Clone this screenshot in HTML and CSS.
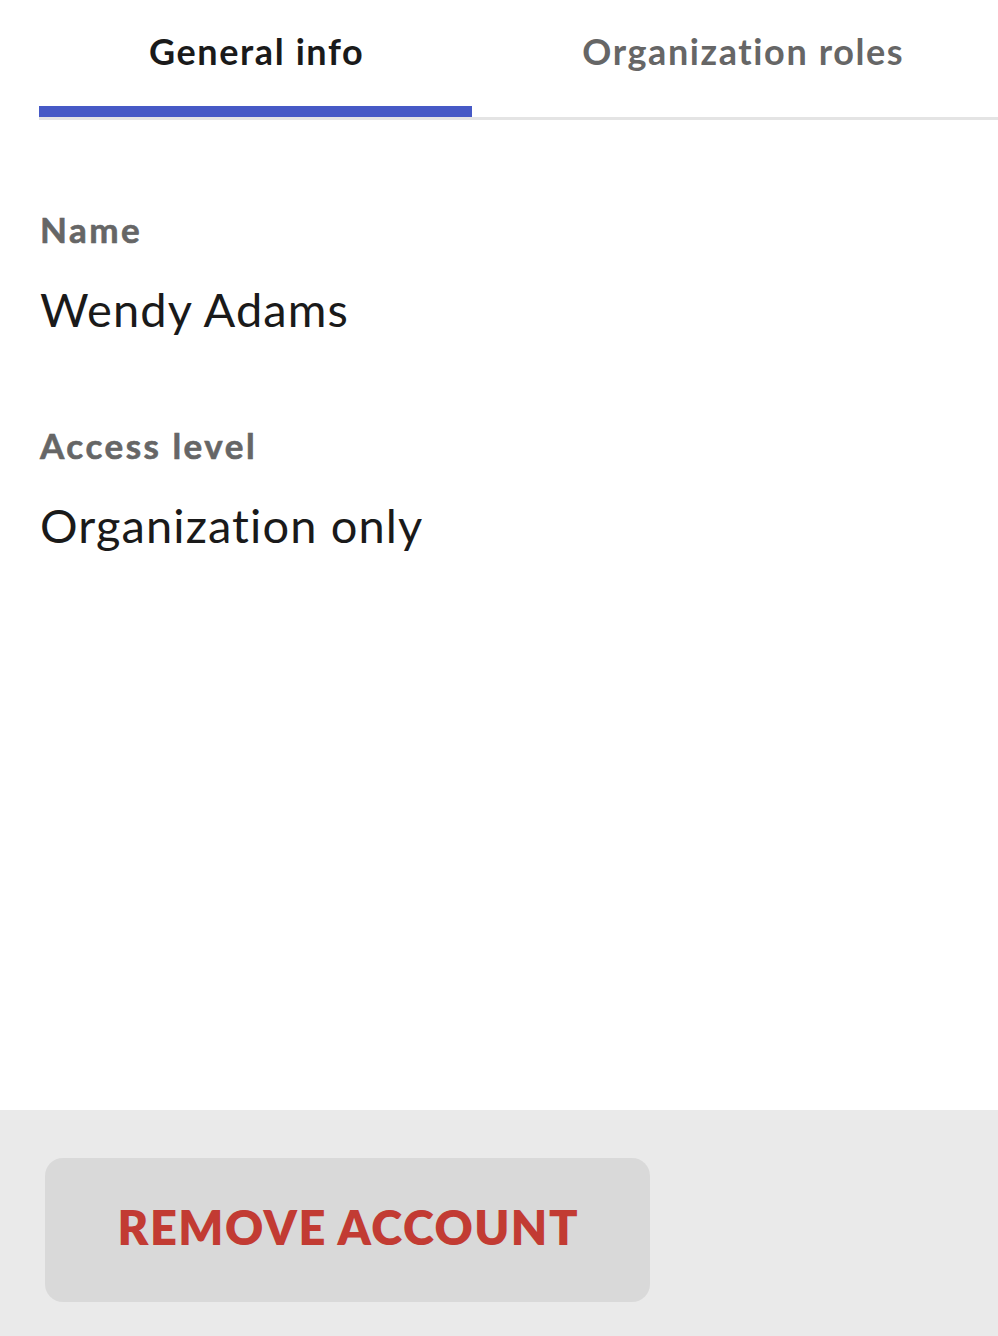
FILE: index.html
```html
<!DOCTYPE html>
<html lang="en">
<head>
<meta charset="utf-8">
<title>Account</title>
<link rel="stylesheet" href="styles.css">
</head>
<body>
<div class="page">
  <main class="main">
    <nav class="tabs">
      <div class="tab tab-active">General info</div>
      <div class="tab">Organization roles</div>
    </nav>
    <section class="details">
      <div class="field">
        <div class="label">Name</div>
        <div class="value">Wendy Adams</div>
      </div>
      <div class="field">
        <div class="label">Access level</div>
        <div class="value">Organization only</div>
      </div>
    </section>
  </main>
  <footer class="footer">
    <button class="remove-btn" type="button">REMOVE ACCOUNT</button>
  </footer>
</div>
</body>
</html>
```

FILE: styles.css
```css
html, body {
  margin: 0;
  padding: 0;
  background: #ffffff;
}

body {
  font-family: Lato, "Open Sans", "Liberation Sans", sans-serif;
  font-variant-ligatures: none;
  color: #1a1a1a;
  overflow: hidden;
}

.page {
  display: flex;
  flex-direction: column;
  height: 1336px;
}

.main {
  flex: 1;
  display: flex;
  flex-direction: column;
}

.tabs {
  display: flex;
  margin-left: 39px;
  border-bottom: 3px solid #e4e4e4;
  white-space: nowrap;
}

.tab {
  flex: none;
  padding: 29px 108px 33px 110px;
  font-size: 36px;
  line-height: 44px;
  font-weight: 700;
  letter-spacing: 1.6px;
  color: #666666;
  border-bottom: 11px solid transparent;
}

.tab-active {
  color: #1a1a1a;
  border-bottom-color: #4659c6;
}

.details {
  padding: 88px 40px 0;
  display: flex;
  flex-direction: column;
  gap: 87px;
}

.field {
  display: flex;
  flex-direction: column;
  gap: 31px;
}

.label {
  font-size: 35px;
  line-height: 42px;
  font-weight: 700;
  letter-spacing: 2.5px;
  -webkit-text-stroke: 0.6px #666666;
  color: #666666;
}

.value {
  font-size: 47px;
  line-height: 56px;
  font-weight: 400;
  letter-spacing: 1.1px;
  color: #1a1a1a;
}

.footer {
  height: 226px;
  background: #eaeaea;
  padding: 48px 0 0 45px;
  box-sizing: border-box;
}

.remove-btn {
  width: 605px;
  height: 144px;
  border: none;
  border-radius: 18px;
  background: #d9d9d9;
  color: #c23b33;
  font-family: Lato, "Open Sans", "Liberation Sans", sans-serif;
  font-size: 47px;
  font-weight: 800;
  letter-spacing: 1.5px;
  text-indent: 1.5px;
  padding: 0 0 6px;
  margin: 0;
}
```
